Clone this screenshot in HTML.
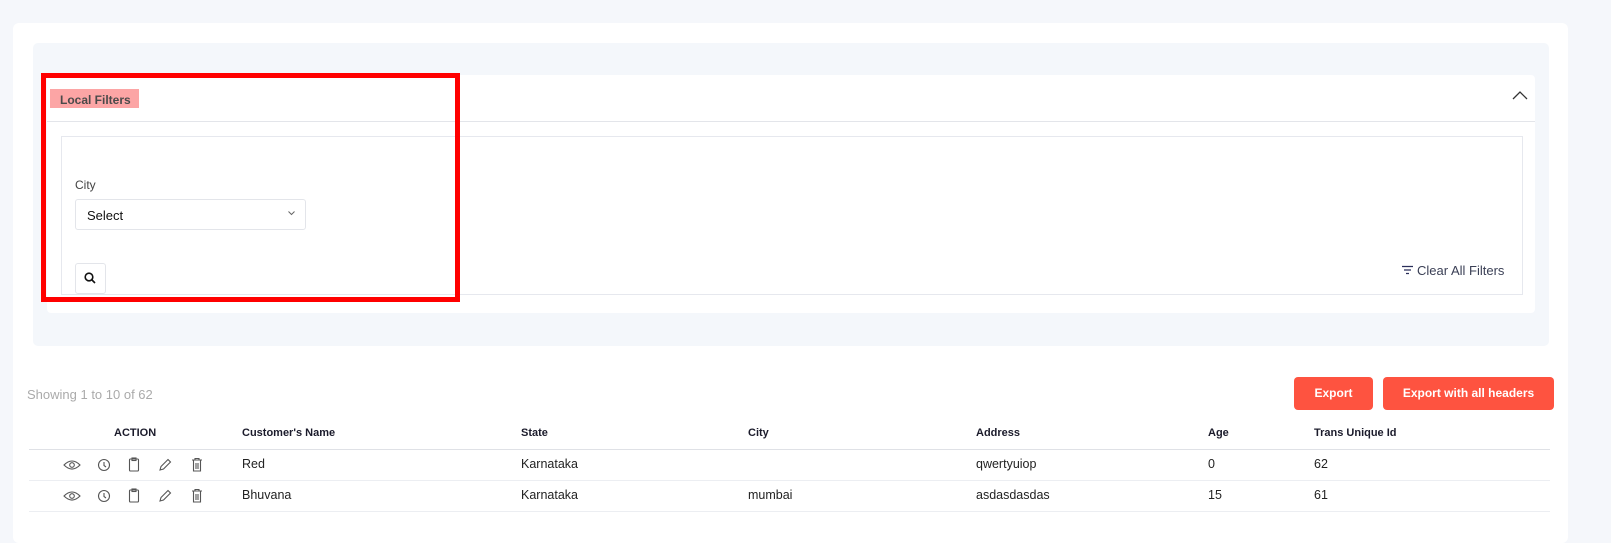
<!DOCTYPE html>
<html><head><style>
*{box-sizing:border-box;margin:0;padding:0}
body{width:1611px;height:528px;background:#f5f7fb;font-family:"Liberation Sans",sans-serif;position:relative;overflow:hidden;color:#222}
.abs{position:absolute}
.card{left:13px;top:23px;width:1555px;height:520px;background:#fff;border-radius:6px}
.panel{left:33px;top:43px;width:1516px;height:303px;background:#f4f7fb;border-radius:5px}
.inner{left:47px;top:75px;width:1488px;height:238px;background:#fff;border-radius:4px}
.hline{left:47px;top:121px;width:1488px;height:1px;background:#e3e5ea}
.box{left:61px;top:136px;width:1462px;height:159px;border:1px solid #e6e8ee}
.red{left:41px;top:73px;width:419px;height:229px;border:5px solid #ff0000}
.lf{left:50px;top:89px;width:89px;height:19px;background:#fca5a5;font-size:12px;font-weight:bold;color:#4a4a4a;padding:4px 0 0 10px}
.sel{left:75px;top:199px;width:231px;height:31px;border:1px solid #e3e5ea;border-radius:3px;font-size:13px;padding:8px 0 0 11px;color:#111}
.sb{left:75px;top:263px;width:31px;height:31px;border:1px solid #e3e5ea;border-radius:3px}
.btn{background:#fe5340;color:#fff;font-size:12px;font-weight:bold;border-radius:4px;text-align:center;line-height:33px}
th,td{position:absolute;font-size:12px}
.th{font-weight:bold;font-size:11px;top:427px;color:#1b1b2b}
.td{font-size:12.5px;color:#222}
.line{left:29px;width:1521px;height:1px;background:#dfe1e6}
</style></head><body>
<div class="abs card"></div>
<div class="abs panel"></div>
<div class="abs inner"></div>
<div class="abs hline"></div>
<div class="abs box"></div>
<div class="abs lf">Local Filters</div>
<svg class="abs" style="left:1512px;top:90px" width="16" height="10"><path d="M1 9 L8 2 L15 9" stroke="#333" stroke-width="1.3" fill="none"/></svg>
<div class="abs" style="left:75px;top:178px;font-size:12px;color:#444">City</div>
<div class="abs sel">Select</div>
<svg class="abs" style="left:288px;top:211px" width="7" height="5"><path d="M0.5 0.5 L3.5 3.5 L6.5 0.5" stroke="#666" fill="none"/></svg>
<div class="abs sb"></div>
<svg class="abs" style="left:84px;top:272px" width="12" height="12"><circle cx="5" cy="5" r="3.8" stroke="#111" stroke-width="1.6" fill="none"/><path d="M8 8 L11 11" stroke="#111" stroke-width="1.6"/></svg>
<svg class="abs" style="left:1401px;top:265px" width="13" height="10"><path d="M1 1.5H12M3 5H10M5 8.5H8" stroke="#2a2f5a" stroke-width="1.3"/></svg>
<div class="abs" style="left:1417px;top:263px;font-size:13px;color:#3a3f55">Clear All Filters</div>
<div class="abs red"></div>
<div class="abs" style="left:27px;top:387px;font-size:13px;color:#aaa">Showing 1 to 10 of 62</div>
<div class="abs btn" style="left:1294px;top:377px;width:79px;height:33px">Export</div>
<div class="abs btn" style="left:1383px;top:377px;width:171px;height:33px">Export with all headers</div>
<div class="abs th" style="left:114px">ACTION</div>
<div class="abs th" style="left:242px">Customer's Name</div>
<div class="abs th" style="left:521px">State</div>
<div class="abs th" style="left:748px">City</div>
<div class="abs th" style="left:976px">Address</div>
<div class="abs th" style="left:1208px">Age</div>
<div class="abs th" style="left:1314px">Trans Unique Id</div>
<div class="abs line" style="top:449px"></div>
<div class="abs line" style="top:480px;background:#eceef2"></div>
<div class="abs line" style="top:511px;background:#eceef2"></div>
<div class="abs td" style="left:242px;top:457px">Red</div>
<div class="abs td" style="left:521px;top:457px">Karnataka</div>
<div class="abs td" style="left:976px;top:457px">qwertyuiop</div>
<div class="abs td" style="left:1208px;top:457px">0</div>
<div class="abs td" style="left:1314px;top:457px">62</div>
<div class="abs td" style="left:242px;top:488px">Bhuvana</div>
<div class="abs td" style="left:521px;top:488px">Karnataka</div>
<div class="abs td" style="left:748px;top:488px">mumbai</div>
<div class="abs td" style="left:976px;top:488px">asdasdasdas</div>
<div class="abs td" style="left:1208px;top:488px">15</div>
<div class="abs td" style="left:1314px;top:488px">61</div>
<svg class="abs" style="left:60px;top:456px" width="150" height="50">
<g stroke="#555" stroke-width="1.1" fill="none">
<g id="r">
<path d="M4 9 Q12 1 20 9 Q12 17 4 9Z"/><circle cx="12" cy="9" r="2.3"/>
<circle cx="44" cy="9" r="5.5"/><path d="M44 6V9.5L46 11"/>
<rect x="69.5" y="3" width="9" height="12" rx="1"/><rect x="72" y="2" width="4" height="2.5"/>
<path d="M100 14L101 10.5L108 3.5L110.5 6L103.5 13Z"/>
<path d="M132 4H142M135 4V2.5H139V4M133.5 4.5V15H140.5V4.5M136 7V13M138 7V13"/>
</g>
<use href="#r" y="31"/>
</g></svg>
</body></html>
